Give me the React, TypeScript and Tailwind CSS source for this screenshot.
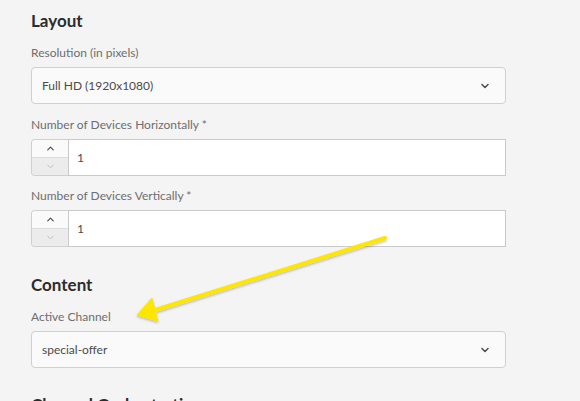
import { ChevronDown, ChevronUp } from "lucide-react";

const font = { fontFamily: "Lato, 'Noto Sans', sans-serif" };

function Heading({ children, className = "" }: { children: React.ReactNode; className?: string }) {
  return <h2 className={`text-[17px] leading-6 font-bold text-[#2c2c2c] ${className}`}>{children}</h2>;
}

function Label({ children }: { children: React.ReactNode }) {
  return <div className="text-[12px] leading-4 text-[#6e6e6e] mb-[6px]">{children}</div>;
}

function Select({ value }: { value: string }) {
  return (
    <div className="flex h-[37px] w-[475px] items-center justify-between rounded-[4px] border border-[#d0d0d0] bg-[#fafafa] pl-[10px] pr-[14px]">
      <span className="text-[12px] text-[#4b4b4b]">{value}</span>
      <ChevronDown size={12} strokeWidth={3} className="text-[#4b4b4b]" />
    </div>
  );
}

function NumberField({ value }: { value: string }) {
  return (
    <div className="flex h-[37px] w-[475px]">
      <div className="flex w-[37px] flex-col overflow-hidden rounded-l-[4px] border border-r-0 border-[#d0d0d0]">
        <div className="flex flex-1 items-center justify-center border-b border-[#dcdcdc] bg-[#fafafa]">
          <ChevronUp size={11} strokeWidth={2.5} className="text-[#4b4b4b]" />
        </div>
        <div className="flex flex-1 items-center justify-center bg-[#ececec]">
          <ChevronDown size={11} strokeWidth={2} className="text-[#b8b8b8]" />
        </div>
      </div>
      <div className="flex flex-1 items-center border border-[#cacaca] bg-white pl-[8px]">
        <span className="text-[12px] text-[#4b4b4b]">{value}</span>
      </div>
    </div>
  );
}

export default function App() {
  return (
    <div className="relative h-[401px] w-[580px] overflow-hidden bg-[#f4f4f4]" style={font}>
      <div className="flex flex-col pl-[31px] pt-[9px]">
        <Heading className="mb-[12px]">Layout</Heading>
        <Label>Resolution (in pixels)</Label>
        <Select value="Full HD (1920x1080)" />
        <div className="mt-[13px]">
          <Label>Number of Devices Horizontally *</Label>
          <NumberField value="1" />
        </div>
        <div className="mt-[12px]">
          <Label>Number of Devices Vertically *</Label>
          <NumberField value="1" />
        </div>
        <Heading className="mt-[26px] mb-[12px]">Content</Heading>
        <Label>Active Channel</Label>
        <Select value="special-offer" />
        <Heading className="mt-[25px]">Channel Orchestration</Heading>
      </div>

      <svg className="pointer-events-none absolute left-0 top-0" width="580" height="401" viewBox="0 0 580 401">
        <defs>
          <filter id="sh" x="-10%" y="-10%" width="120%" height="130%">
            <feDropShadow dx="0" dy="1.5" stdDeviation="1" floodColor="#000" floodOpacity="0.25" />
          </filter>
        </defs>
        <g filter="url(#sh)" fill="#ffe600" stroke="#ffe600">
          <line x1="385" y1="238" x2="152" y2="311" strokeWidth="4" strokeLinecap="round" />
          <polygon points="137,315 152,298 158,321" strokeWidth="1" strokeLinejoin="round" />
        </g>
      </svg>
    </div>
  );
}
